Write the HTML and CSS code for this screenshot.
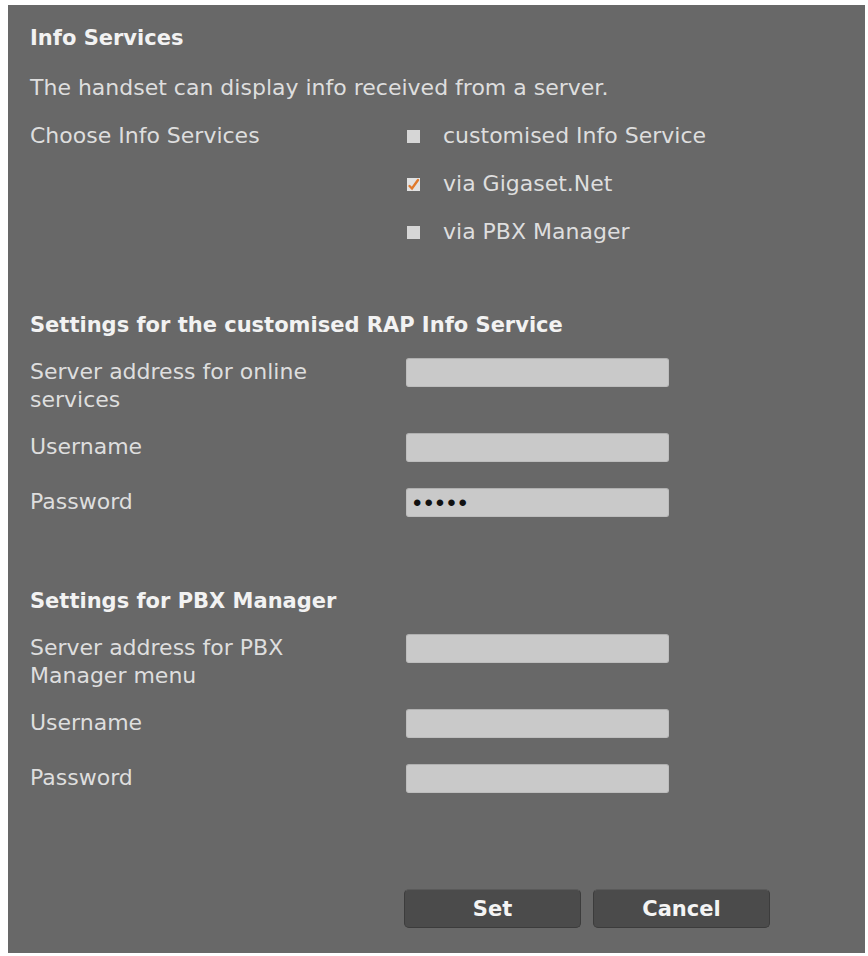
FILE: index.html
```html
<!DOCTYPE html>
<html lang="en">
<head>
  <meta charset="UTF-8">
  <title>Info Services</title>
  <link rel="stylesheet" href="styles.css">
</head>
<body>
  <div class="panel">
    <h2 class="title">Info Services</h2>
    <p class="intro">The handset can display info received from a server.</p>

    <div class="choose">
      <div class="label">Choose Info Services</div>
      <div class="options">
        <div class="option"><span class="box"></span>customised Info Service</div>
        <div class="option">
          <span class="box checked">
            <svg width="13" height="13" viewBox="0 0 13 13"><path d="M2.5 8 L5 10.5 L11 2" fill="none" stroke="#e07a2c" stroke-width="2.4" stroke-linecap="round"/></svg>
          </span>via Gigaset.Net
        </div>
        <div class="option"><span class="box"></span>via PBX Manager</div>
      </div>
    </div>

    <h2 class="section">Settings for the customised RAP Info Service</h2>
    <div class="row">
      <label class="label">Server address for online<br>services</label>
      <input type="text" class="field">
    </div>
    <div class="row">
      <label class="label">Username</label>
      <input type="text" class="field">
    </div>
    <div class="row">
      <label class="label">Password</label>
      <input type="password" class="field secret" value="12345">
    </div>

    <h2 class="section pbx">Settings for PBX Manager</h2>
    <div class="row">
      <label class="label">Server address for PBX<br>Manager menu</label>
      <input type="text" class="field">
    </div>
    <div class="row">
      <label class="label">Username</label>
      <input type="text" class="field">
    </div>
    <div class="row">
      <label class="label">Password</label>
      <input type="password" class="field secret">
    </div>

    <div class="buttons">
      <button class="btn">Set</button>
      <button class="btn">Cancel</button>
    </div>
  </div>
</body>
</html>
```

FILE: styles.css
```css
/* page */
body {
  margin: 0;
  background-color: #ffffff;
  font-family: "DejaVu Sans", Verdana, sans-serif;
}

.panel {
  margin: 5px 3px 0 8px;
  height: 948px;
  box-sizing: border-box;
  background-color: #686868;
  padding: 19px 0 0 22px;
  color: #dedede;
  font-size: 22px;
  line-height: 28px;
}

.title,
.section {
  margin: 0;
  font-size: 21px;
  font-weight: bold;
  color: #f2f2f2;
}

.intro {
  margin: 22px 0 20px 0;
  white-space: nowrap;
}

/* info service choice */
.choose {
  display: grid;
  grid-template-columns: 376px 1fr;
}

.option {
  display: flex;
  align-items: center;
  height: 28px;
  margin-bottom: 20px;
  white-space: nowrap;
}

.box {
  flex: none;
  width: 13px;
  height: 13px;
  background-color: #d6d6d6;
  margin-left: 1px;
  margin-right: 23px;
  display: flex;
}

.box.checked {
  background-color: #e2e2e2;
}

.section {
  margin-top: 45px;
  margin-bottom: 19px;
}

.section.pbx {
  margin-top: 63px;
}

/* form rows */
.row {
  display: grid;
  grid-template-columns: 376px 263px;
  align-items: start;
  min-height: 36px;
  margin-bottom: 19px;
}

.field {
  height: 29px;
  box-sizing: border-box;
  border: 1px solid #bdbdbd;
  border-top-color: #b0b0b0;
  border-radius: 3px;
  background-color: #c9c9c9;
  padding: 0 7px;
  font-size: 17px;
  color: #111;
}

.field.secret {
  font-size: 24px;
  letter-spacing: 3px;
  padding-left: 6px;
}

.buttons {
  display: flex;
  gap: 12px;
  margin: 89px 0 0 374px;
}

.btn {
  width: 177px;
  height: 39px;
  border: 1px solid #3c3c3c;
  border-top-color: #5a5a5a;
  border-radius: 5px;
  background-color: #4b4b4b;
  color: #f4f4f4;
  font-family: "DejaVu Sans", Verdana, sans-serif;
  font-size: 21px;
  font-weight: bold;
}
```
